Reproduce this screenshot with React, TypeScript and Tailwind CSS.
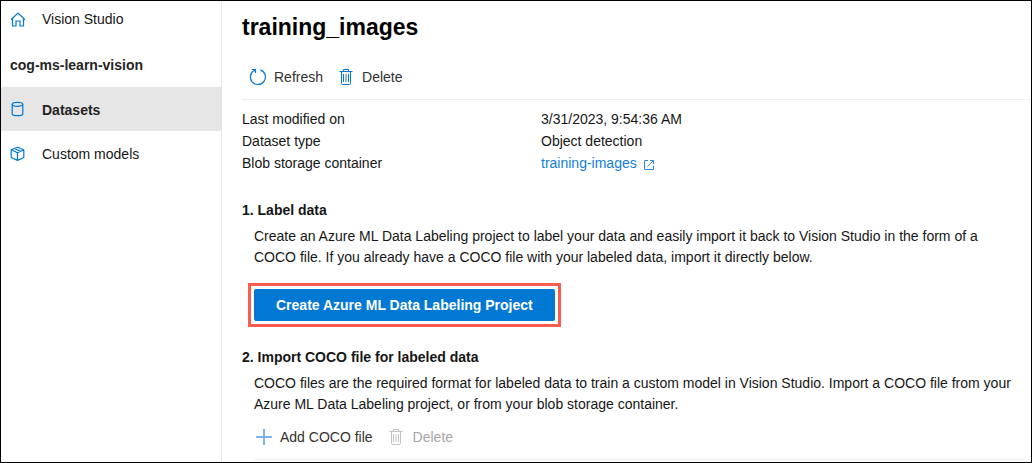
import type { ReactNode } from "react";

function HomeIcon() {
  return (
    <svg viewBox="0 0 16 16" className="h-4 w-4" fill="none" stroke="#0078d4" strokeWidth="1.2">
      <path d="M1 8.800 8 2l7 6.800M2.500 7.500v7.500h3.500v-5h4v5h3.500V7.500" />
    </svg>
  );
}

function DatabaseIcon() {
  return (
    <svg viewBox="0 0 16 16" className="h-4 w-4" fill="none" stroke="#0078d4" strokeWidth="1.2">
      <ellipse cx="7.500" cy="3.300" rx="5.300" ry="2" />
      <path d="M2.200 3.300v9.400c0 1.100 2.400 2 5.300 2s5.300-.900 5.300-2V3.300" />
    </svg>
  );
}

function CubeIcon() {
  return (
    <svg viewBox="0 0 16 16" className="h-4 w-4" fill="none" stroke="#0078d4" strokeWidth="1.2" strokeLinejoin="round">
      <path d="M7.500 2.200 13.800 4.800v7.700l-6.300 2.900-6.300-2.900V4.800zM1.200 4.800l6.300 3L13.800 4.800M7.500 7.800v7.600M4.300 3.500l6.300 2.900" />
    </svg>
  );
}

function RefreshIcon() {
  return (
    <svg viewBox="0 0 18 18" className="h-[18px] w-[18px]" fill="none" stroke="#0078d4" strokeWidth="1.2">
      <path d="M11.400 1.900A7.500 7.500 0 1 1 6.200 2M2.700 1.500h3.800v3.500" />
    </svg>
  );
}

function TrashIcon() {
  return (
    <svg viewBox="0 0 14 18" className="h-[18px] w-3.5" fill="none" stroke="currentColor">
      <path d="M.5 3.500h13M4.500 3.500v-2h5v2M2.500 3.500v12c0 .600.400 1 1 1h7c.600 0 1-.400 1-1v-12M4.500 6v8M7 6v8M9.500 6v8" />
    </svg>
  );
}

function PlusIcon() {
  return (
    <svg viewBox="0 0 16 16" className="h-4 w-4" fill="none" stroke="#79b5e8" strokeWidth="2">
      <path d="M8 0v16M0 8h16" />
    </svg>
  );
}

function ExternalIcon() {
  return (
    <svg viewBox="0 0 12 12" className="h-3 w-3" fill="none" stroke="#2b88d8">
      <path d="M5 1.500H1.500v9h9V7M7 1.500h3.500V5M10.500 1.500l-6 6" />
    </svg>
  );
}

function NavLink({ icon, label, active }: { icon: ReactNode; label: string; active?: boolean }) {
  return (
    <a
      href="#"
      aria-current={active ? "page" : undefined}
      className={
        active
          ? "flex h-11 items-center gap-4 bg-[#e6e6e6] pl-[9px] font-bold text-[#242424]"
          : "flex h-11 items-center gap-4 pl-[9px]"
      }
    >
      {icon}
      <span className="pt-0.5">{label}</span>
    </a>
  );
}

function Section({ title, text, children }: { title: string; text: string; children: ReactNode }) {
  return (
    <section className="pr-[7px]">
      <h2 className="font-bold leading-5">{title}</h2>
      <div className="pl-3">
        <p className="mt-1.5 pr-1 leading-[21px]">{text}</p>
        {children}
      </div>
    </section>
  );
}

export default function App() {
  return (
    <div className="flex min-h-screen border border-black bg-white font-['Liberation_Sans',Arial,sans-serif] text-sm text-[#161616]">
      <nav className="w-[221px] shrink-0 border-r border-[#e6e6e6]">
        <a href="#" className="flex h-9 items-center gap-4 pl-[9px]">
          <HomeIcon />
          <span>Vision Studio</span>
        </a>
        <h2 className="flex h-[50px] items-center pt-1.5 pl-[9px] font-bold text-[#242424]">cog-ms-learn-vision</h2>
        <NavLink icon={<DatabaseIcon />} label="Datasets" active />
        <NavLink icon={<CubeIcon />} label="Custom models" />
      </nav>

      <main className="min-w-0 flex-1 pl-5">
        <h1 className="pt-2.5 text-[23px] leading-8 font-bold text-black">training_images</h1>

        <div className="mt-3 flex h-[45px] items-center gap-4 border-b border-[#eeeeee] pl-[7px] text-[#323130]">
          <button type="button" className="flex items-center gap-[7px]">
            <RefreshIcon />
            Refresh
          </button>
          <button type="button" className="flex items-center gap-[9px]">
            <span className="text-[#0078d4]">
              <TrashIcon />
            </span>
            Delete
          </button>
        </div>

        <dl className="mt-2 grid grid-cols-[299px_1fr] leading-[22px]">
          <dt>Last modified on</dt>
          <dd>3/31/2023, 9:54:36 AM</dd>
          <dt>Dataset type</dt>
          <dd>Object detection</dd>
          <dt>Blob storage container</dt>
          <dd>
            <a href="#" className="inline-flex items-center gap-1.5 text-[#1180d8]">
              training-images
              <span className="pt-1">
                <ExternalIcon />
              </span>
            </a>
          </dd>
        </dl>

        <div className="mt-[26px] flex flex-col gap-5">
          <Section
            title="1. Label data"
            text="Create an Azure ML Data Labeling project to label your data and easily import it back to Vision Studio in the form of a COCO file. If you already have a COCO file with your labeled data, import it directly below."
          >
            <div className="mt-[15px] -ml-1.5 w-fit border-3 border-[#fb5c4e] p-[3px]">
              <button type="button" className="block h-8 rounded-xs bg-[#0078d4] px-[22px] font-bold text-white">
                Create Azure ML Data Labeling Project
              </button>
            </div>
          </Section>

          <Section
            title="2. Import COCO file for labeled data"
            text="COCO files are the required format for labeled data to train a custom model in Vision Studio. Import a COCO file from your Azure ML Data Labeling project, or from your blob storage container."
          >
            <div className="flex h-[45px] items-center gap-4 border-b border-[#eeeeee] pl-0.5 text-[#323130]">
              <button type="button" className="flex items-center gap-2">
                <PlusIcon />
                Add COCO file
              </button>
              <button type="button" disabled className="flex items-center gap-2.5 text-[#a6a6a6]">
                <span className="text-[#c4c4c4]">
                  <TrashIcon />
                </span>
                Delete
              </button>
            </div>
          </Section>
        </div>
      </main>
    </div>
  );
}
